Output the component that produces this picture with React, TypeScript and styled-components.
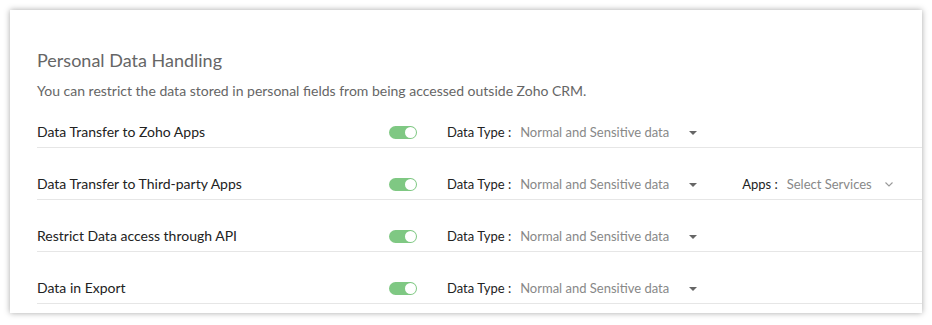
import styled, { createGlobalStyle } from "styled-components";

const GlobalStyle = createGlobalStyle`
  html, body {
    margin: 0;
    padding: 0;
    background: #fff;
  }
  body {
    font-family: Lato, "Open Sans", "Liberation Sans", sans-serif;
    -webkit-font-smoothing: antialiased;
  }
`;

const Page = styled.div`
  padding: 10px;
  width: 932px;
  box-sizing: border-box;
`;

const Card = styled.section`
  background: #fff;
  box-shadow: 0 0 6px rgba(0, 0, 0, 0.35);
  padding: 40px 0 9px 27px;
`;

const Title = styled.h2`
  margin: 0;
  font-size: 18px;
  line-height: 20px;
  font-weight: 400;
  color: #666;
`;

const Description = styled.p`
  margin: 12px 0 0;
  font-size: 14px;
  line-height: 18px;
  color: #666;
`;

const List = styled.div`
  display: flex;
  flex-direction: column;
`;

const Row = styled.div`
  display: flex;
  align-items: center;
  padding: 27px 0 6px;
  border-bottom: 1px solid #e6e6e6;
  font-size: 14px;
  line-height: 18px;

  &:first-child {
    padding-top: 23px;
  }
`;

const RowLabel = styled.div`
  width: 352px;
  color: #222;
`;

const Toggle = styled.span<{ $on: boolean }>`
  position: relative;
  width: 28px;
  height: 13px;
  border-radius: 7px;
  background: ${({ $on }) => ($on ? "#7fc883" : "#ccc")};
  flex-shrink: 0;

  &::after {
    content: "";
    position: absolute;
    top: 1px;
    left: ${({ $on }) => ($on ? "16px" : "1px")};
    width: 11px;
    height: 11px;
    border-radius: 50%;
    background: #fff;
  }
`;

const Field = styled.div<{ $gap: number }>`
  display: flex;
  align-items: center;
  margin-left: ${({ $gap }) => $gap}px;
  font-size: 13px;
`;

const FieldLabel = styled.span`
  color: #222;
  margin-right: 9px;
`;

const Select = styled.div<{ $width: number }>`
  display: flex;
  align-items: center;
  justify-content: space-between;
  width: ${({ $width }) => $width}px;
  color: #888;
`;

const Caret = styled.span`
  width: 0;
  height: 0;
  border-left: 4px solid transparent;
  border-right: 4px solid transparent;
  border-top: 4px solid #666;
  margin-top: 2px;
`;

const Chevron = () => (
  <svg width="8" height="5" viewBox="0 0 8 5" fill="none" style={{ marginTop: 1 }}>
    <path d="M0.5 0.5 L4 4 L7.5 0.5" stroke="#999" strokeWidth="1.1" />
  </svg>
);

const rows = [
  { label: "Data Transfer to Zoho Apps", apps: false },
  { label: "Data Transfer to Third-party Apps", apps: true },
  { label: "Restrict Data access through API", apps: false },
  { label: "Data in Export", apps: false },
];

function App() {
  return (
    <Page>
      <GlobalStyle />
      <Card>
        <Title>Personal Data Handling</Title>
        <Description>
          You can restrict the data stored in personal fields from being accessed outside Zoho CRM.
        </Description>
        <List>
          {rows.map((r) => (
            <Row key={r.label}>
              <RowLabel>{r.label}</RowLabel>
              <Toggle $on />
              <Field $gap={30}>
                <FieldLabel>Data Type :</FieldLabel>
                <Select $width={177}>
                  Normal and Sensitive data
                  <Caret />
                </Select>
              </Field>
              {r.apps && (
                <Field $gap={45}>
                  <FieldLabel>Apps :</FieldLabel>
                  <Select $width={106}>
                    Select Services
                    <Chevron />
                  </Select>
                </Field>
              )}
            </Row>
          ))}
        </List>
      </Card>
    </Page>
  );
}

export default App;
